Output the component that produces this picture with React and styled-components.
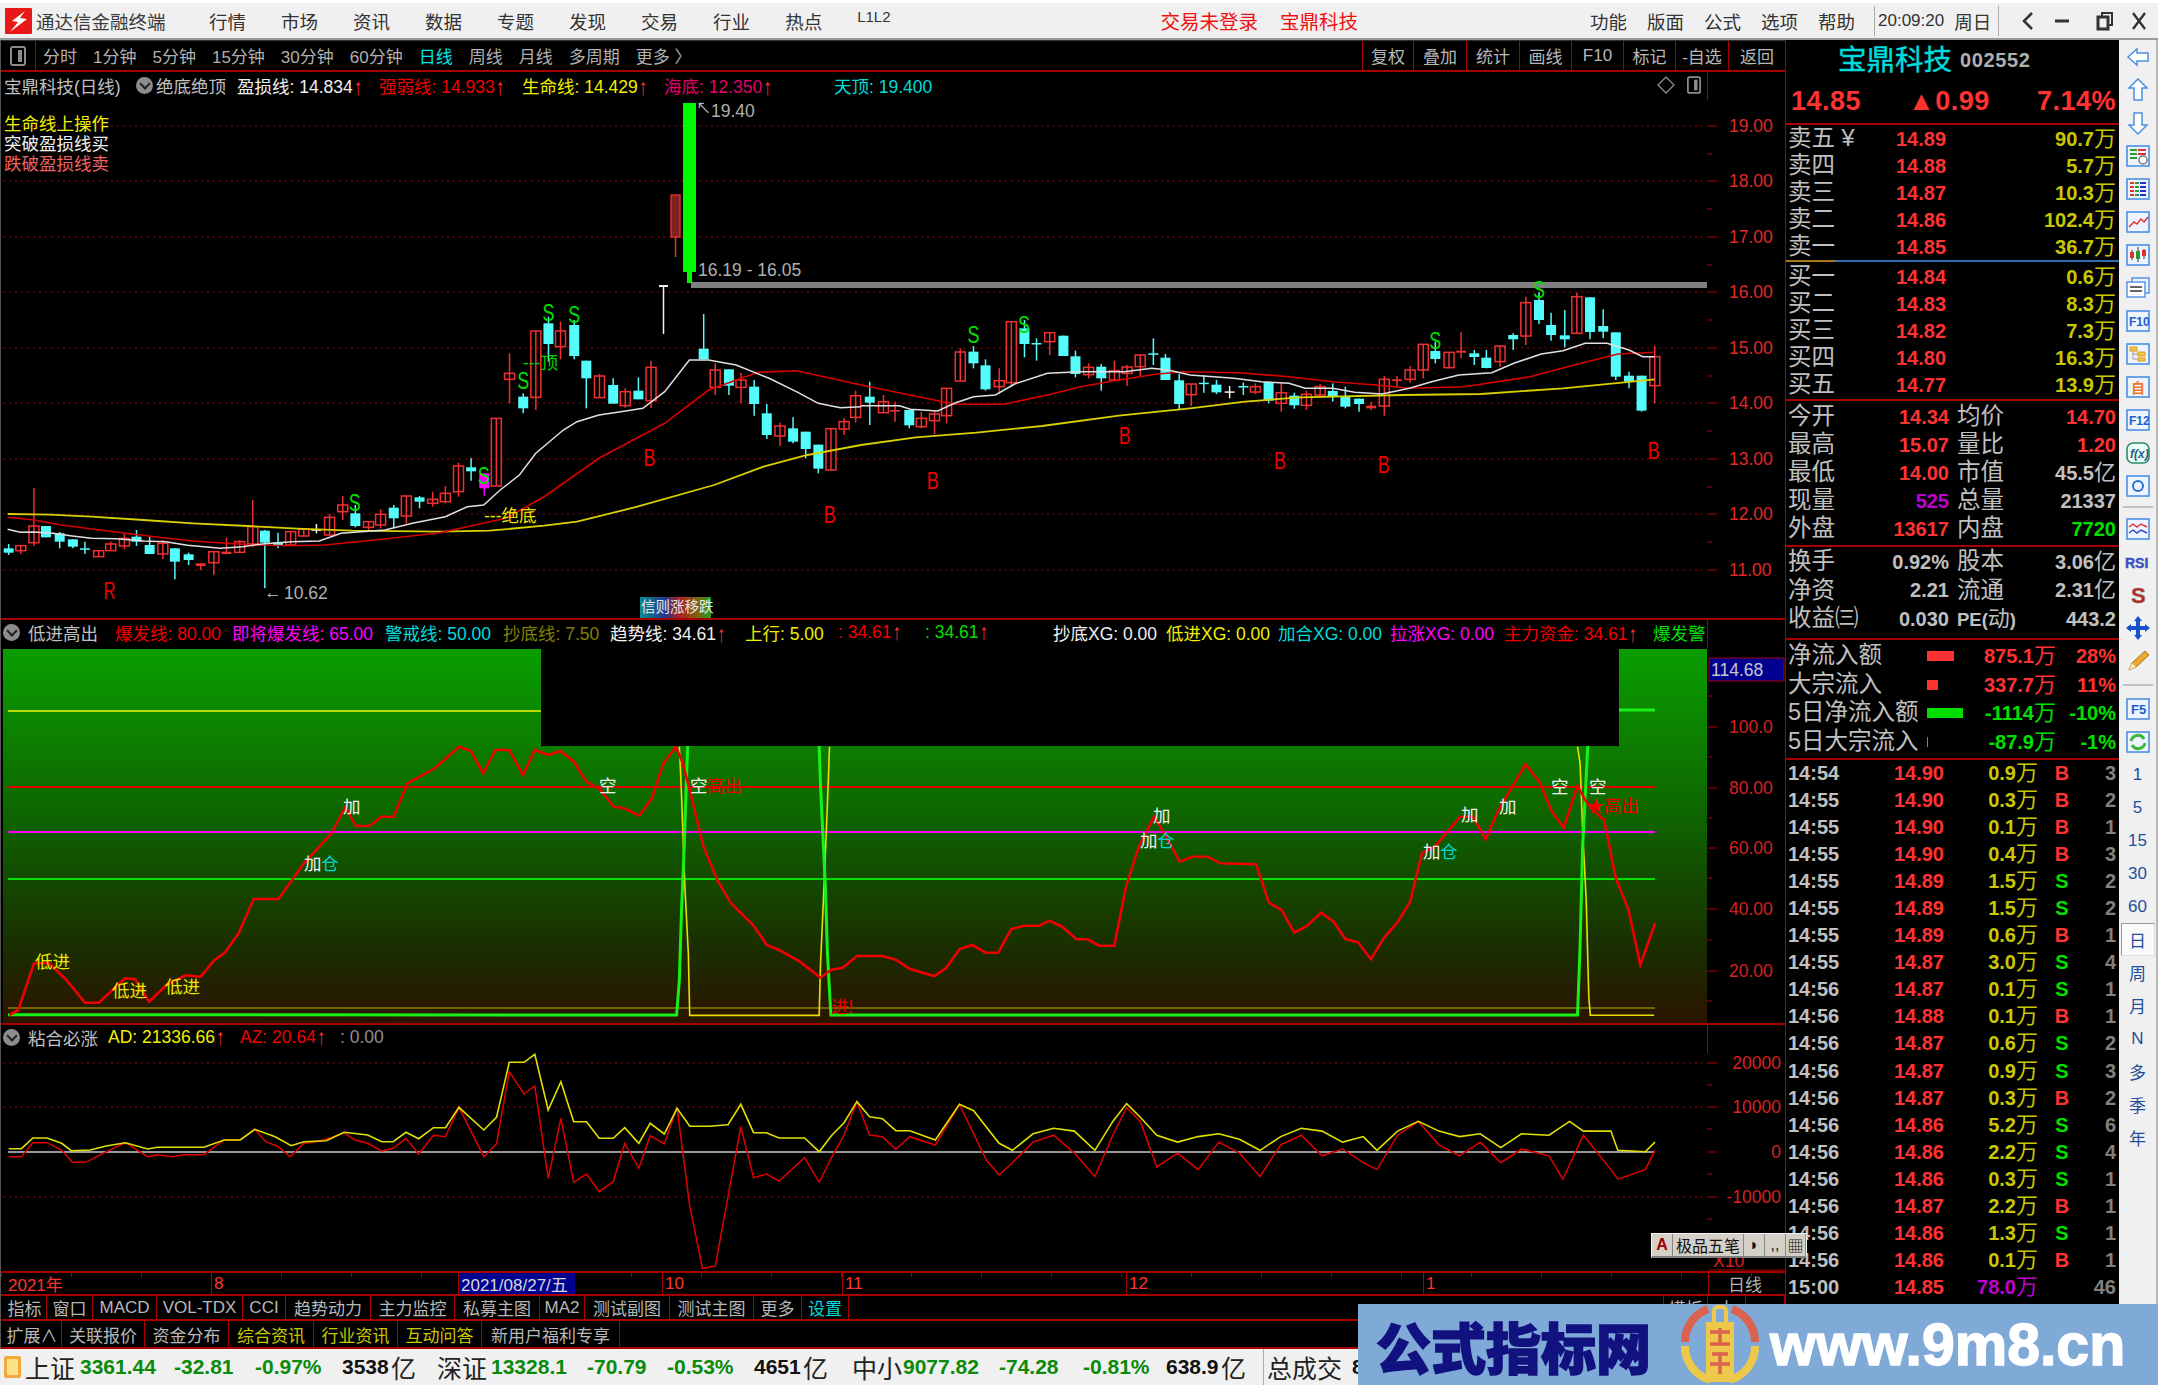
import React from "react";
import styled, { createGlobalStyle } from "styled-components";

const RED_LINE = "#a80000";
const GRAY = "#c0c0c0";
const RED = "#ff3232";
const OLIVE = "#c8c800";

const Global = createGlobalStyle`
  html, body { margin: 0; padding: 0; background: #000; }
  body { font-family: "Liberation Sans", "Noto Sans CJK SC", sans-serif; }
  * { box-sizing: border-box; }
`;

const Screen = styled.div`
  position: relative;
  width: 2158px;
  height: 1385px;
  overflow: hidden;
  display: flex;
  flex-direction: column;
  background: #000;
`;

/* ---------- title bar ---------- */
const TitleBar = styled.div`
  height: 40px;
  display: flex;
  align-items: center;
  background: #f0f0f0;
  border-top: 3px solid #fff;
  border-bottom: 2px solid #9a9a9a;
  color: #333;
  font-size: 18.5px;
`;
const AppName = styled.div`
  width: 173px;
  flex: none;
  color: #3a3a3a;
`;
const MenuGroup = styled.div`
  display: flex;
  gap: ${(p) => p.$gap}px;
  margin-left: ${(p) => p.$ml || 0};
  color: ${(p) => p.$c || "#333"};
  font-size: ${(p) => p.$s || 18.5}px;
`;
const SmallMenu = styled.span`
  font-size: 15px;
`;
const Clock = styled.div`
  height: 30px;
  margin-left: 19px;
  padding: 0 4px 0 3px;
  display: flex;
  gap: 10px;
  align-items: center;
  border-left: 1px solid #aaa;
  border-right: 1px solid #aaa;
  font-size: 17px;
  width: 125px;
  span:last-child { font-size: 18.5px; white-space: nowrap; }
`;
const WinButtons = styled.div`
  width: 159px;
  flex: none;
  display: flex;
  align-items: center;
`;
const WinGlyph = styled.svg`
  display: block;
  flex: none;
  margin-left: ${(p) => p.$ml}px;
`;

/* ---------- layout ---------- */
const Body = styled.div`
  flex: 1;
  display: flex;
  min-height: 0;
`;
const ChartColumn = styled.div`
  width: 1786px;
  flex: none;
  display: flex;
  flex-direction: column;
  border-left: 1px solid #555;
  border-right: 1px solid ${RED_LINE};
  color: ${GRAY};
  font-size: 17px;
`;
const PeriodBar = styled.div`
  height: 32px;
  flex: none;
  display: flex;
  align-items: center;
  border-top: 1px solid #333;
  border-bottom: 2px solid ${RED_LINE};
`;
const CornerButton = styled.div`
  width: 35px;
  height: 100%;
  flex: none;
  display: flex;
  align-items: center;
  justify-content: center;
  border-right: 1px solid ${RED_LINE};
`;
const Periods = styled.div`
  display: flex;
  gap: 16px;
  margin-left: 7px;
`;
const Period = styled.span`
  color: ${(p) => (p.$on ? "#00e8e8" : "#b0b0b0")};
  white-space: nowrap;
`;
const ToolCells = styled.div`
  margin-left: auto;
  display: flex;
  height: 100%;
`;
const ToolCell = styled.div`
  width: ${(p) => p.$w}px;
  border-left: 1px solid ${RED_LINE};
  display: flex;
  align-items: center;
  justify-content: center;
  color: #b8b8b8;
  white-space: nowrap;
`;

const PaneHead = styled.div`
  height: ${(p) => p.$h}px;
  flex: none;
  ${(p) => p.$line && `border-top: 2px solid ${RED_LINE};`}
`;
const PaneText = styled.div`
  width: 1707px;
  height: 100%;
  display: flex;
  align-items: center;
  overflow: hidden;
  white-space: nowrap;
  font-size: 17.5px;
  padding-bottom: ${(p) => p.$pb || 0}px;
  border-right: 1px solid ${RED_LINE};
`;
const Legend = styled.span`
  flex: none;
  width: ${(p) => (p.$w ? `${p.$w}px` : "auto")};
  padding-left: ${(p) => p.$pl || 0}px;
  color: ${(p) => p.$c || GRAY};
`;
const Arrow = styled.span`
  display: inline-block;
  color: ${RED};
  font-weight: 700;
  margin-left: 1px;
  transform: scale(1, 1.3);
`;
const Toggle = styled.span`
  flex: none;
  width: 17px;
  height: 17px;
  margin: ${(p) => p.$m};
  border-radius: 50%;
  background: #8c8c8c;
  position: relative;
  &::after {
    content: "";
    position: absolute;
    left: 4.5px;
    top: 3px;
    width: 6px;
    height: 6px;
    border-right: 2px solid #222;
    border-bottom: 2px solid #222;
    transform: rotate(45deg);
  }
`;
const HeadIcons = styled.div`
  margin-left: auto;
  display: flex;
  gap: 12px;
  align-items: center;
  padding-right: 6px;
`;
const Plot = styled.svg`
  display: block;
  flex: none;
  width: 1784px;
  height: ${(p) => p.$h}px;
`;
const ChartLabel = styled.text`
  font-size: ${(p) => p.$s || 17.5}px;
  fill: ${(p) => p.$c || RED};
  text-anchor: ${(p) => p.$a || "start"};
  dominant-baseline: middle;
  font-weight: ${(p) => p.$b || 400};
`;

const TimeAxis = styled.div`
  height: 25px;
  flex: none;
  display: flex;
  border-top: 2px solid ${RED_LINE};
  border-bottom: 2px solid ${RED_LINE};
  color: ${RED};
  background-image: repeating-linear-gradient(90deg, ${RED_LINE} 0 1px, transparent 1px 70px);
  background-size: 100% 4px;
  background-repeat: no-repeat;
`;
const TimeCell = styled.div`
  width: ${(p) => p.$w}px;
  flex: none;
  display: flex;
  align-items: center;
  padding-left: ${(p) => p.$pl || 2}px;
  background: ${(p) => (p.$flag ? "#000090" : "transparent")};
  color: ${(p) => p.$c || RED};
  border-left: ${(p) => (p.$plain ? 0 : `1px solid ${RED_LINE}`)};
  white-space: nowrap;
`;
const TabRow = styled.div`
  height: ${(p) => p.$h}px;
  flex: none;
  display: flex;
  border-bottom: 2px solid ${RED_LINE};
  padding-left: 2px;
`;
const Tab = styled.div`
  width: ${(p) => p.$w}px;
  flex: none;
  display: flex;
  align-items: center;
  justify-content: center;
  color: ${(p) => p.$c || "#b8b8b8"};
  border-right: 1px solid ${RED_LINE};
  white-space: nowrap;
  ${(p) => p.$push && `margin-left: auto; border-left: 1px solid ${RED_LINE};`}
`;

/* ---------- quote column ---------- */
const QuoteColumn = styled.div`
  width: 333px;
  flex: none;
  color: ${GRAY};
  font-size: 20px;
  line-height: 1;
`;
const StockTitle = styled.div`
  height: 40px;
  display: flex;
  align-items: center;
  padding-left: 52px;
  gap: 8px;
  b {
    font-weight: 400;
    font-size: 28.5px;
    color: #00dcdc;
    -webkit-text-stroke: 0.4px #00dcdc;
  }
  span { font-size: 20px; font-weight: 700; color: #b0b0b0; letter-spacing: 0.6px; }
`;
const PriceRow = styled.div`
  height: 45px;
  display: flex;
  align-items: center;
  justify-content: space-between;
  padding: 0 3px 0 5px;
  border-bottom: 2px solid ${RED_LINE};
  font-size: 27px;
  font-weight: 700;
  color: ${RED};
  letter-spacing: 0.5px;
`;
const OrderRow = styled.div`
  height: 27px;
  display: grid;
  grid-template-columns: 108px 60px 1fr;
  align-items: center;
  padding: 0 3px 0 2px;
`;
const Label = styled.span`
  font-size: 23.5px;
  font-weight: 400;
  white-space: nowrap;
  color: ${GRAY};
`;
const PeLabel = styled.span`
  font-size: 18.5px;
  font-weight: 700;
  color: ${GRAY};
  white-space: nowrap;
`;
const Num = styled.span`
  font-weight: 700;
  white-space: nowrap;
  color: ${(p) => p.$c || GRAY};
  text-align: ${(p) => p.$a || "left"};
`;
const Unit = styled.span`
  font-size: 22px;
  font-weight: 400;
`;
const MidDivider = styled.div`
  height: 2px;
  margin: 0 0 1.5px;
  background: linear-gradient(90deg, #a87820 0 50px, #2c6ea8 50px);
`;
const Group = styled.div`
  height: ${(p) => p.$h}px;
  padding-top: ${(p) => p.$pt || 0}px;
  border-top: 2px solid ${RED_LINE};
`;
const StatRow = styled.div`
  height: ${(p) => p.$h}px;
  display: grid;
  grid-template-columns: 80px 81px 8px 80px 1fr;
  align-items: center;
  padding: 0 3px 0 2px;
`;
const FlowRow = styled.div`
  height: 28.7px;
  display: grid;
  grid-template-columns: 139px 45px 84px 1fr;
  align-items: center;
  padding: 0 3px 0 2px;
`;
const FlowBar = styled.i`
  display: block;
  height: 10px;
  width: ${(p) => p.$w}px;
  background: ${(p) => p.$c};
`;
const TickRow = styled.div`
  height: 27.05px;
  display: grid;
  grid-template-columns: 54px 102px 94px 48px 1fr;
  align-items: center;
  padding: 0 3px 0 2px;
`;
const Side = styled.span`
  font-weight: 700;
  text-align: center;
  color: ${(p) => (p.$v === "B" ? RED : "#00e000")};
`;

/* ---------- right tool strip ---------- */
const ToolStrip = styled.div`
  flex: 1;
  background: #f0f0f0;
  border-right: 2px solid #b8b8b8;
  display: flex;
  flex-direction: column;
  align-items: center;
`;
const StripItem = styled.div`
  height: 33px;
  width: 34px;
  flex: none;
  display: flex;
  align-items: center;
  justify-content: center;
  color: #1f4f9a;
  font-size: 17px;
  ${(p) => p.$on && "background: #fafafa; border: 1px solid #ddd; border-left-color: #999; border-top-color: #999;"}
`;
const StripGap = styled.div`
  height: ${(p) => p.$h}px;
  width: 30px;
  flex: none;
  display: flex;
  align-items: center;
  &::after { content: ""; width: 100%; height: 2px; background: #c0c0c0; }
`;

/* ---------- status bar ---------- */
const StatusBar = styled.div`
  height: 36px;
  flex: none;
  display: flex;
  align-items: center;
  background: #f0f0f0;
  padding-left: 4px;
  white-space: nowrap;
`;
const StatusCell = styled.span`
  flex: none;
  width: ${(p) => p.$w}px;
  color: ${(p) => p.$c || "#0a8a0a"};
  font-size: ${(p) => (p.$cjk ? 25 : 21)}px;
  font-weight: ${(p) => (p.$cjk ? 400 : 700)};
  ${(p) => p.$sep && "border-left: 1px solid #aaa; padding-left: 3px;"}
`;
const StatusIcon = styled.span`
  flex: none;
  width: 17px;
  height: 22px;
  margin-right: 4px;
  border: 3px solid #f2a93b;
  background: #ffe08a;
  border-radius: 2px;
`;

/* ---------- overlays ---------- */
const ImeBar = styled.div`
  position: absolute;
  left: 1651px;
  top: 1233px;
  width: 156px;
  height: 25px;
  display: flex;
  background: #d4d0c8;
  border: 1px solid #f4f4f4;
  border-bottom: 2px solid #808080;
  color: #111;
  font-size: 16px;
`;
const ImeCell = styled.span`
  width: ${(p) => p.$w}px;
  display: flex;
  align-items: center;
  justify-content: center;
  border-right: 1px solid #888;
  white-space: nowrap;
  color: ${(p) => p.$c || "#111"};
`;
const Watermark = styled.div`
  position: absolute;
  left: 1358px;
  top: 1304px;
  width: 800px;
  height: 81px;
  display: flex;
  align-items: center;
  background: #7fa9d6;
`;
const Brand = styled.div`
  margin-left: 18px;
  width: 302px;
  flex: none;
  font-size: 55px;
  font-weight: 900;
  color: #11117f;
  -webkit-text-stroke: 1.5px #11117f;
  white-space: nowrap;
`;
const Site = styled.div`
  margin-left: 8px;
  font-size: 59px;
  font-weight: 700;
  color: #fff;
  -webkit-text-stroke: 1.5px #fff;
  white-space: nowrap;
`;
const BrandLogo = styled.svg`
  flex: none;
`;

/* ---------- data, read off the screen in crop coordinates ---------- */
const z7 = (x, y) => [x / 1.823, 240 + y / 3];
const z8 = (x, y) => [860 + x / 1.823, 240 + y / 3];
const z9 = (x, y) => [x / 1.452, 620 + y / 3];
const z10 = (x, y) => [1000 + x / 1.96, 620 + y / 3];
const z11 = (x, y) => [x / 1.568, 1020 + y / 3];
const full = (x, y) => [x * 1.376, y * 1.376];

const pts = (list, map) => list.map(([x, y]) => map(x, y).map((v) => v.toFixed(1)).join(",")).join(" ");

// x, body top, body bottom, wick top, wick bottom, kind
const candlesA = [
  [14, 925, 938, 912, 945, "c"], [36, 917, 932, 917, 942, "r"], [60, 858, 908, 745, 918, "r"], [82, 858, 892, 858, 892, "c"],
  [107, 880, 905, 876, 925, "c"], [131, 898, 920, 898, 925, "c"], [153, 925, 928, 905, 942, "c"], [178, 932, 950, 932, 950, "r"],
  [200, 912, 932, 905, 932, "r"], [225, 895, 918, 880, 928, "r"], [247, 890, 905, 870, 918, "c"], [271, 915, 942, 890, 942, "c"],
  [295, 910, 942, 900, 958, "r"], [317, 925, 965, 925, 1018, "c"], [342, 943, 960, 938, 975, "c"], [364, 970, 978, 970, 990, "f"],
  [388, 935, 968, 935, 1005, "r"], [411, 935, 942, 893, 942, "f"], [435, 905, 937, 900, 937, "r"], [459, 860, 912, 780, 922, "r"],
  [481, 872, 908, 870, 1045, "c"], [505, 908, 916, 878, 925, "c"], [528, 875, 915, 875, 915, "r"], [552, 868, 888, 868, 888, "r"],
  [575, 868, 872, 852, 880, "w"], [599, 832, 885, 822, 885, "r"], [623, 795, 815, 768, 840, "r"], [646, 820, 858, 795, 862, "c"],
  [670, 845, 862, 845, 870, "r"], [692, 823, 855, 808, 865, "r"], [716, 803, 835, 795, 865, "c"], [739, 768, 828, 768, 850, "r"],
  [763, 772, 785, 768, 805, "c"], [787, 778, 790, 755, 800, "r"], [810, 760, 785, 738, 790, "r"], [834, 678, 755, 668, 770, "r"],
  [857, 682, 694, 655, 722, "c"], [881, 700, 745, 700, 767, "m"], [903, 535, 738, 535, 738, "r"], [927, 400, 418, 340, 490, "r"],
  [952, 470, 505, 460, 520, "c"], [975, 273, 472, 273, 510, "r"], [998, 250, 312, 230, 365, "c"], [1020, 273, 320, 245, 358, "r"],
  [1045, 255, 348, 240, 358, "c"], [1067, 362, 415, 362, 505, "c"], [1091, 408, 473, 402, 473, "r"], [1116, 435, 491, 415, 491, "c"],
  [1138, 455, 497, 445, 503, "r"], [1162, 452, 478, 412, 478, "c"], [1185, 382, 482, 362, 505, "r"], [1281, 326, 358, 222, 358, "c"],
  [1302, 390, 442, 370, 465, "r"], [1327, 388, 437, 388, 465, "c"], [1349, 420, 442, 398, 490, "r"], [1373, 440, 492, 420, 527, "c"],
  [1396, 520, 585, 492, 597, "c"], [1420, 558, 588, 548, 618, "r"], [1444, 565, 605, 532, 610, "c"], [1467, 575, 627, 575, 655, "c"],
  [1490, 614, 686, 614, 700, "c"], [1513, 566, 690, 566, 690, "r"], [1537, 545, 567, 535, 585, "r"], [1558, 467, 532, 452, 548, "r"],
];
const candlesB = [
  [16, 470, 488, 425, 555, "c"], [41, 485, 518, 465, 520, "r"], [62, 510, 513, 485, 545, "f"], [88, 510, 556, 510, 565, "c"],
  [110, 535, 560, 515, 565, "r"], [134, 522, 542, 510, 582, "r"], [156, 445, 527, 445, 550, "r"], [181, 336, 423, 325, 423, "r"],
  [205, 335, 370, 318, 385, "c"], [227, 376, 448, 358, 452, "c"], [252, 422, 440, 385, 455, "r"], [274, 245, 428, 245, 440, "r"],
  [298, 265, 312, 240, 352, "c"], [320, 309, 312, 295, 362, "c"], [344, 278, 305, 278, 345, "r"], [369, 287, 348, 287, 348, "c"],
  [391, 349, 402, 332, 412, "c"], [415, 382, 404, 370, 415, "r"], [438, 380, 415, 372, 452, "c"], [462, 392, 420, 362, 420, "r"],
  [485, 381, 400, 375, 438, "r"], [509, 345, 380, 345, 408, "r"], [533, 340, 344, 295, 375, "c"], [555, 353, 420, 342, 420, "c"],
  [580, 421, 492, 402, 508, "c"], [602, 432, 464, 432, 498, "r"], [625, 428, 431, 405, 458, "c"], [648, 434, 457, 420, 462, "c"],
  [672, 454, 457, 438, 475, "w"], [697, 438, 441, 428, 465, "c"], [719, 440, 456, 430, 462, "r"], [743, 426, 482, 426, 490, "c"],
  [766, 458, 490, 430, 515, "r"], [790, 467, 496, 458, 506, "c"], [812, 463, 496, 452, 510, "r"], [837, 440, 465, 432, 470, "r"],
  [860, 453, 470, 430, 485, "c"], [883, 470, 500, 440, 505, "c"], [908, 476, 492, 476, 515, "c"], [930, 497, 505, 485, 510, "f"],
  [954, 418, 498, 408, 527, "r"], [977, 418, 423, 408, 440, "f"], [1001, 390, 418, 378, 428, "r"], [1025, 313, 390, 313, 415, "r"],
  [1047, 333, 357, 305, 370, "c"], [1072, 337, 383, 337, 383, "r"], [1094, 332, 338, 277, 355, "f"], [1118, 340, 351, 330, 375, "c"],
  [1140, 353, 384, 330, 385, "c"], [1165, 318, 365, 318, 380, "r"], [1189, 285, 298, 280, 330, "c"], [1212, 188, 288, 170, 315, "r"],
  [1236, 180, 240, 157, 252, "c"], [1258, 255, 285, 218, 302, "c"], [1283, 286, 298, 210, 322, "c"], [1305, 170, 280, 158, 280, "r"],
  [1329, 172, 276, 172, 298, "c"], [1353, 258, 275, 208, 295, "c"], [1376, 277, 410, 277, 420, "c"], [1400, 407, 425, 395, 445, "c"],
  [1423, 407, 512, 407, 515, "c"], [1447, 350, 437, 318, 490, "r"],
];
const CANDLE = { c: "#54fcfc", r: "#f03030", f: "#f03030", w: "#f0f0f0", m: "#ff00ff" };

const whiteA = [[12,868],[35,877],[60,876],[95,880],[130,888],[165,895],[210,896],[260,903],[300,905],[340,916],[400,925],[440,920],[480,911],[530,905],[580,903],[620,880],[700,870],[750,850],[810,830],[850,800],[880,795],[910,750],[945,705],[975,640],[1025,570],[1050,545],[1090,525],[1130,515],[1170,505],[1210,455],[1255,360],[1290,360],[1340,375],[1400,415],[1450,455],[1490,490],[1530,503],[1568,500]];
const whiteB = [[0,497],[70,497],[90,508],[140,513],[170,490],[205,470],[245,465],[280,432],[340,400],[400,395],[480,395],[530,385],[560,390],[600,405],[680,415],[730,425],[780,430],[810,445],[860,445],[900,457],[950,462],[1000,445],[1040,425],[1090,405],[1150,398],[1190,370],[1240,342],[1280,332],[1320,310],[1360,310],[1400,330],[1425,350],[1447,350]];
const redA = [[12,832],[60,840],[110,855],[180,870],[280,890],[350,903],[410,910],[460,914],[520,917],[590,915],[650,905],[720,893],[800,878],[850,860],[920,835],[990,770],[1090,655],[1210,550],[1290,450],[1380,397],[1450,392],[1568,435]];
const redB = [[0,435],[60,455],[140,482],[170,493],[260,493],[340,465],[400,440],[470,420],[540,402],[590,395],[690,398],[780,410],[860,425],[940,435],[1000,445],[1100,440],[1220,410],[1300,375],[1380,342],[1447,337]];
const yellowA = [[12,822],[90,824],[165,830],[260,840],[350,850],[450,858],[540,866],[640,872],[800,875],[890,872],[990,857],[1050,845],[1160,800],[1300,735],[1390,680],[1470,645],[1568,615]];
const yellowB = [[0,615],[100,592],[210,578],[330,558],[470,527],[600,505],[700,485],[800,472],[990,465],[1130,462],[1280,445],[1447,418]];

const sellMarks = [[z7,645,795],[z7,880,715],[z7,952,430],[z7,998,225],[z7,1045,232],[z8,205,290],[z8,297,262],[z8,1047,308],[z8,1236,155]];
const buyMarks = [[z7,1182,660,"B"],[z7,1511,830,"B"],[z7,198,1060,"R"],[z8,131,730,"B"],[z8,481,595,"B"],[z8,764,668,"B"],[z8,953,682,"B"],[z8,1445,640,"B"]];

const flowA = [[12,1185],[25,1170],[48,1030],[70,1030],[95,1080],[122,1148],[142,1148],[180,1075],[195,1078],[215,1145],[240,1095],[268,1066],[290,1070],[310,1020],[325,998],[345,940],[367,837],[403,837],[440,730],[480,640],[500,560],[515,618],[535,618],[552,590],[570,590],[590,490],[630,445],[665,380],[682,392],[700,460],[718,390],[738,390],[758,465],[775,390],[795,405],[812,393],[832,425],[850,485],[868,505],[890,560],[905,565],[927,587],[945,535],[962,430],[980,380],[990,430],[1000,510],[1020,680],[1040,780],[1060,850],[1092,915],[1112,975],[1130,990],[1160,1025],[1190,1073],[1205,1050],[1222,1043],[1243,1008],[1280,1008],[1300,1020],[1320,1047],[1355,1068],[1372,1045],[1392,987],[1410,975],[1430,998],[1448,998]];
const flowB = [[20,927],[45,917],[75,917],[95,902],[120,920],[148,958],[170,958],[192,977],[222,977],[245,800],[270,680],[300,590],[320,640],[350,725],[375,710],[405,710],[430,730],[500,733],[525,848],[550,870],[575,938],[600,918],[627,878],[652,905],[675,957],[700,967],[725,1018],[750,955],[778,905],[802,845],[825,700],[850,680],[900,590],[925,590],[950,658],[975,570],[1028,433],[1055,485],[1080,575],[1103,623],[1130,497],[1145,540],[1160,570],[1182,600],[1205,775],[1230,870],[1253,1035],[1282,910]];

const BASE_Y = 1014.7;
const pulseGreen = [
  [7, BASE_Y], ...[[981,1185],[985,1080],[988,880],[992,680],[997,380]].map(([x, y]) => z9(x, y)),
  [690, 710], [815, 710],
  ...[[1188,380],[1190,500],[1197,800],[1200,1000],[1205,1185]].map(([x, y]) => z9(x, y)),
  ...[[1130,1185],[1135,980],[1140,680],[1150,380]].map(([x, y]) => z10(x, y)),
  [1590, 710], [1654, 710],
];
const pulseYellow = [
  ...[[985,380],[988,520],[993,800],[998,1000],[1000,1186],[1188,1186],[1190,1030],[1195,800],[1200,550],[1203,380]].map(([x, y]) => z9(x, y)),
];
const pulseYellow2 = [[1130,380],[1135,430],[1140,630],[1147,840],[1152,1130],[1155,1186],[1280,1186]];

const adA = [[12,386],[32,386],[50,354],[72,354],[95,370],[110,392],[140,390],[165,378],[195,368],[230,387],[245,382],[318,382],[350,360],[375,360],[398,328],[430,350],[455,377],[475,365],[510,362],[538,337],[575,345],[597,365],[615,365],[635,337],[655,356],[678,323],[697,323],[718,262],[757,330],[777,292],[797,127],[820,127],[837,103],[858,270],[878,185],[898,305],[918,305],[938,355],[960,355],[978,323],[1000,370],[1018,310],[1040,342],[1060,265],[1080,319],[1110,319],[1140,314],[1160,253],[1180,338],[1200,338],[1220,354],[1260,354],[1283,395],[1303,345],[1322,308],[1342,245],[1362,290],[1382,296],[1403,332],[1425,332],[1465,360],[1503,253],[1525,272],[1565,370]];
const adB = [[735,836],[750,824],[765,820],[780,822],[795,836],[808,815],[818,802],[828,812],[840,825],[855,830],[870,826],[885,824],[900,828],[915,836],[930,826],[945,820],[960,822],[975,830],[990,826],[1000,836],[1015,822],[1030,815],[1045,822],[1060,826],[1075,824],[1090,834],[1105,824],[1125,825],[1140,815],[1150,822],[1170,822],[1175,836],[1195,837],[1202,830]];
const azA = [[12,410],[32,410],[50,368],[72,368],[95,390],[112,427],[133,427],[160,400],[195,368],[230,410],[245,404],[268,410],[285,404],[318,404],[350,360],[375,360],[398,328],[415,365],[435,380],[453,410],[475,370],[495,365],[520,352],[538,338],[555,360],[575,370],[597,393],[615,385],[635,355],[655,402],[678,346],[697,350],[718,262],[757,410],[777,372],[797,155],[820,222],[837,198],[858,475],[878,295],[898,487],[918,462],[938,515],[960,485],[978,370],[1000,445],[1018,347],[1040,372],[1060,262],[1080,560],[1100,745],[1120,738],[1140,530],[1160,320],[1180,473],[1200,462],[1220,483],[1260,413],[1283,487],[1303,410],[1322,345],[1342,245],[1362,345],[1382,350],[1403,388],[1425,350],[1465,375],[1503,253],[1545,420],[1565,465]];
const azB = [[735,845],[750,830],[765,825],[780,838],[795,855],[808,825],[818,805],[828,815],[840,848],[855,838],[870,850],[885,830],[900,838],[915,855],[930,832],[945,825],[960,840],[975,835],[990,845],[1000,850],[1015,825],[1030,815],[1045,832],[1060,840],[1075,830],[1090,845],[1105,835],[1125,840],[1135,857],[1150,825],[1170,850],[1175,857],[1195,850],[1202,836]];

const PRICE_AXIS = [[19, 126], [18, 181], [17, 237], [16, 292], [15, 348], [14, 403], [13, 459], [12, 514], [11, 570]];

const asks = [["卖五", "14.89", "90.7"], ["卖四", "14.88", "5.7"], ["卖三", "14.87", "10.3"], ["卖二", "14.86", "102.4"], ["卖一", "14.85", "36.7"]];
const bids = [["买一", "14.84", "0.6"], ["买二", "14.83", "8.3"], ["买三", "14.82", "7.3"], ["买四", "14.80", "16.3"], ["买五", "14.77", "13.9"]];
const ticks = [
  ["14:54","14.90","0.9","B",3],["14:55","14.90","0.3","B",2],["14:55","14.90","0.1","B",1],["14:55","14.90","0.4","B",3],
  ["14:55","14.89","1.5","S",2],["14:55","14.89","1.5","S",2],["14:55","14.89","0.6","B",1],["14:55","14.87","3.0","S",4],
  ["14:56","14.87","0.1","S",1],["14:56","14.88","0.1","B",1],["14:56","14.87","0.6","S",2],["14:56","14.87","0.9","S",3],
  ["14:56","14.87","0.3","B",2],["14:56","14.86","5.2","S",6],["14:56","14.86","2.2","S",4],["14:56","14.86","0.3","S",1],
  ["14:56","14.87","2.2","B",1],["14:56","14.86","1.3","S",1],["14:56","14.86","0.1","B",1],["15:00","14.85","78.0","",46],
];
const toolCells = [["复权", 51], ["叠加", 53], ["统计", 53], ["画线", 52], ["F10", 52], ["标记", 52], ["-自选", 53], ["返回", 57]];
const tabsMain = [["指标", 44], ["窗口", 46], ["MACD", 64], ["VOL-TDX", 86], ["CCI", 43], ["趋势动力", 85], ["主力监控", 84], ["私募主图", 85], ["MA2", 45], ["测试副图", 85], ["测试主图", 84], ["更多", 48]];

/* ---------- small drawings ---------- */
const Logo = () => (
  <svg width="27" height="26" viewBox="0 0 27 26" style={{ margin: "0 4px 0 5px", flex: "none" }}>
    <rect width="27" height="26" rx="1" fill="#e81818" />
    <path d="M20 3 L7 13 L13 14 L5 24 L22 11 L15 10 Z" fill="#fff" />
  </svg>
);

const Square = ({ size = 16 }) => (
  <svg width={size} height={size + 4} viewBox="0 0 16 20">
    <rect x="1" y="1" width="14" height="18" rx="2" fill="none" stroke="#8c8c8c" strokeWidth="2" />
    <rect x="8" y="4" width="4" height="12" fill="#8c8c8c" />
  </svg>
);

const Ico = ({ children }) => (
  <svg width="26" height="26" viewBox="0 0 26 26" fill="none">
    {children}
  </svg>
);
const Frame = ({ children }) => (
  <Ico>
    <rect x="2" y="3" width="22" height="20" fill="#eef4ff" stroke="#4a90e2" strokeWidth="1.6" />
    {children}
  </Ico>
);
const Bars = ({ rows }) =>
  rows.map(([x, y, w, c], i) => <rect key={i} x={x} y={y} width={w} height="2" fill={c} />);

const stripTop = [
  <Ico><path d="M3 13 L12 5 V9 H23 V17 H12 V21 Z" fill="#fff" stroke="#4a90e2" strokeWidth="1.5" /></Ico>,
  <Ico><path d="M13 2 L22 11 H17 V23 H9 V11 H4 Z" fill="#fff" stroke="#4a90e2" strokeWidth="1.5" /></Ico>,
  <Ico><path d="M13 24 L22 15 H17 V3 H9 V15 H4 Z" fill="#fff" stroke="#4a90e2" strokeWidth="1.5" /></Ico>,
  <Frame><Bars rows={[[5,6,7,"#2a9a2a"],[13,6,8,"#e03030"],[5,10,7,"#2a9a2a"],[13,10,8,"#e03030"],[5,14,7,"#2a9a2a"]]} /><circle cx="18" cy="17" r="4" fill="#fff" stroke="#777" strokeWidth="1.5" /></Frame>,
  <Frame><Bars rows={[[5,6,4,"#e03030"],[10,6,4,"#2a9a2a"],[15,6,6,"#2030d0"],[5,10,4,"#e03030"],[10,10,4,"#2a9a2a"],[15,10,6,"#2030d0"],[5,14,4,"#e03030"],[10,14,4,"#2a9a2a"],[15,14,6,"#2030d0"],[5,18,4,"#e03030"],[10,18,4,"#2a9a2a"],[15,18,6,"#2030d0"]]} /></Frame>,
  <Frame><path d="M4 18 L9 13 L12 15 L16 10 L19 13 L23 8" stroke="#e03030" strokeWidth="1.5" /></Frame>,
  <Frame><path d="M7 8 V18 M13 5 V20 M19 7 V17" stroke="#333" /><rect x="5" y="10" width="4" height="6" fill="#e03030" /><rect x="11" y="9" width="4" height="8" fill="#2a9a2a" /><rect x="17" y="8" width="4" height="6" fill="#e03030" /></Frame>,
  <Ico><rect x="7" y="3" width="17" height="15" fill="#eef4ff" stroke="#4a90e2" strokeWidth="1.4" /><rect x="2" y="7" width="18" height="15" fill="#fff" stroke="#4a90e2" strokeWidth="1.4" /><Bars rows={[[5,11,12,"#666"],[5,15,12,"#666"]]} /></Ico>,
  <Frame><text x="4" y="18" fontSize="12" fill="#2060c8" fontWeight="700">F10</text></Frame>,
  <Frame><rect x="5" y="6" width="7" height="4" fill="#f3c64a" stroke="#e0a020" /><rect x="13" y="11" width="7" height="4" fill="#f3c64a" stroke="#e0a020" /><rect x="13" y="17" width="7" height="3" fill="#f3c64a" stroke="#e0a020" /><path d="M8 10 V18 H13 M8 13 H13" stroke="#999" /></Frame>,
  <Frame><text x="6" y="19" fontSize="14" fill="#f07a28" fontWeight="700">自</text></Frame>,
  <Frame><text x="4" y="18" fontSize="12" fill="#2060c8" fontWeight="700">F12</text></Frame>,
  <Ico><rect x="2" y="3" width="22" height="20" rx="6" fill="#eafff4" stroke="#2a8a6a" strokeWidth="1.6" /><text x="5" y="18" fontSize="12" fill="#1f5f8a" fontStyle="italic" fontWeight="700">f(x)</text></Ico>,
  <Frame><circle cx="13" cy="13" r="5" stroke="#2a6fd0" strokeWidth="2" /></Frame>,
];
const stripMid = [
  <Frame><path d="M4 11 L8 8 L12 11 L16 8 L22 11" stroke="#e03030" strokeWidth="1.4" /><path d="M4 17 L8 14 L12 17 L16 14 L22 17" stroke="#3040d0" strokeWidth="1.4" /></Frame>,
  <Ico><text x="0" y="19" fontSize="14" fill="#3a50c0" fontWeight="700" stroke="#3a50c0" strokeWidth="0.4">RSI</text></Ico>,
  <Ico><text x="6" y="21" fontSize="22" fill="#c02020" fontWeight="700" stroke="#888" strokeWidth="0.6">S</text></Ico>,
  <Ico><path d="M13 1 L17 6 H15 V11 H20 V9 L25 13 L20 17 V15 H15 V20 H17 L13 25 L9 20 H11 V15 H6 V17 L1 13 L6 9 V11 H11 V6 H9 Z" fill="#1a50c8" /></Ico>,
  <Ico><path d="M4 22 L7 15 L20 3 L24 7 L11 19 Z" fill="#f0a830" stroke="#a87018" /><path d="M4 22 L7 15 L11 19 Z" fill="#ffe7b8" /></Ico>,
];
const stripLow = [
  <Frame><text x="6" y="18" fontSize="13" fill="#2060c8" fontWeight="700">F5</text></Frame>,
  <Frame><path d="M6 12 A7 7 0 0 1 19 10 M20 14 A7 7 0 0 1 7 16" stroke="#3cb83c" strokeWidth="3" /></Frame>,
];
const stripText = ["1", "5", "15", "30", "60", "日", "周", "月", "N", "多", "季", "年"];

const Candle = ({ c, map }) => {
  const [x, top, bot, hi, lo, kind] = c;
  const [px, y1] = map(x, top);
  const y2 = map(x, bot)[1];
  const color = CANDLE[kind];
  const solid = kind !== "r";
  return (
    <g>
      <line x1={px} x2={px} y1={map(x, hi)[1]} y2={map(x, lo)[1]} stroke={color} strokeWidth="1.5" />
      <rect
        x={px - 5}
        y={y1}
        width="10"
        height={Math.max(y2 - y1, 1.5)}
        fill={solid ? color : "none"}
        stroke={solid ? "none" : color}
        strokeWidth="1.5"
      />
    </g>
  );
};

const Grid = ({ ys, x2 = 1706 }) =>
  ys.map((y) => <line key={y} x1="2" x2={x2} y1={y} y2={y} stroke="#a00000" strokeDasharray="2 4" />);

const AxisTicks = ({ ys, minor = [] }) => (
  <>
    {ys.map((y) => <line key={y} x1="1706" x2="1716" y1={y} y2={y} stroke={RED_LINE} />)}
    {minor.map((y) => <line key={y} x1="1706" x2="1711" y1={y} y2={y} stroke={RED_LINE} />)}
  </>
);

const Mark = ({ at, t, c }) => {
  const [m, x, y] = at;
  const [px, py] = m(x, y);
  return (
    <ChartLabel x={px} y={py} $s={23} $c={c} $a="middle" textLength={12} lengthAdjust="spacingAndGlyphs">{t}</ChartLabel>
  );
};

const PriceChart = () => {
  const grid = PRICE_AXIS.map((p) => p[1]);
  const minor = grid.slice(0, -1).map((y) => y + 28);
  return (
    <Plot $h={518} viewBox="0 100 1784 518">
      <Grid ys={grid} />
      <AxisTicks ys={grid} minor={minor} />
      <rect x="690" y="282" width="1016" height="6" fill="#808080" />
      {candlesA.map((c) => <Candle key={c[0]} c={c} map={z7} />)}
      {candlesB.map((c) => <Candle key={c[0]} c={c} map={z8} />)}
      {/* long white spike with a cap, left of the limit-up bar */}
      <line x1="662.5" x2="662.5" y1="286" y2="334" stroke="#f0f0f0" strokeWidth="1.5" />
      <line x1="658" x2="667" y1="286" y2="286" stroke="#f0f0f0" strokeWidth="2" />
      <rect x="670" y="195" width="9" height="42" fill="#802020" stroke="#f03030" strokeWidth="1.3" />
      <line x1="674.5" x2="674.5" y1="237" y2="257" stroke="#f03030" strokeWidth="1.5" />
      <rect x="682" y="103" width="13" height="169" fill="#00f800" />
      <rect x="686" y="270" width="5" height="13" fill="#00f800" />

      <polyline points={pts(yellowA, z7)} fill="none" stroke="#d8d000" strokeWidth="1.8" />
      <polyline points={pts(yellowB, z8)} fill="none" stroke="#d8d000" strokeWidth="1.8" />
      <polyline points={pts(redA, z7)} fill="none" stroke="#d80000" strokeWidth="1.6" />
      <polyline points={pts(redB, z8)} fill="none" stroke="#d80000" strokeWidth="1.6" />
      <polyline points={pts(whiteA, z7)} fill="none" stroke="#e0e0e0" strokeWidth="1.5" />
      <polyline points={pts(whiteB, z8)} fill="none" stroke="#e0e0e0" strokeWidth="1.5" />

      <ChartLabel x="3" y="125" $c="#f0f000">生命线上操作</ChartLabel>
      <ChartLabel x="3" y="145" $c="#f0f0f0">突破盈损线买</ChartLabel>
      <ChartLabel x="3" y="165" $c="#f06060">跌破盈损线卖</ChartLabel>
      <ChartLabel x="695" y="109" $c="#c0c0c0" $s={15}>↖</ChartLabel>
      <ChartLabel x="710" y="112" $c="#b0b0b0">19.40</ChartLabel>
      <ChartLabel x="697" y="271" $c="#b0b0b0">16.19 - 16.05</ChartLabel>
      <ChartLabel x="263" y="593" $c="#c0c0c0">←</ChartLabel>
      <ChartLabel x="283" y="594" $c="#b0b0b0">10.62</ChartLabel>
      <ChartLabel x="483" y="517" $c="#e8e000">---绝底</ChartLabel>
      <ChartLabel x="522" y="364" $c="#00d000">---顶</ChartLabel>
      {sellMarks.map((m, i) => <Mark key={i} at={m} t="S" c="#00e000" />)}
      {buyMarks.map((m, i) => <Mark key={i} at={m} t={m[3]} c="#f00000" />)}

      <rect x="639" y="597" width="71" height="21" fill="url(#rank)" />
      <ChartLabel x="640" y="608" $s={14.5} $c="#e8e8e8">信则涨移跌</ChartLabel>
      <defs>
        <linearGradient id="rank" x1="0" x2="1">
          <stop offset="0" stopColor="#0a8a90" />
          <stop offset="0.35" stopColor="#203a90" />
          <stop offset="0.55" stopColor="#b02020" />
          <stop offset="0.8" stopColor="#806010" />
          <stop offset="1" stopColor="#20a020" />
        </linearGradient>
      </defs>

      {PRICE_AXIS.map(([v, y]) => (
        <ChartLabel key={v} x="1728" y={y + 1} $c="#e02828">{v}.00</ChartLabel>
      ))}
    </Plot>
  );
};

const INDICATOR_AXIS = [["100.0", 727], ["80.00", 788], ["60.00", 848], ["40.00", 909], ["20.00", 971]];

const IndicatorLabel = ({ x, y, a, b, ca = "#f0f0f0", cb = "#00d8d8" }) => (
  <>
    <ChartLabel x={x} y={y} $c={ca}>{a}</ChartLabel>
    {b && <ChartLabel x={x + 17} y={y} $c={cb}>{b}</ChartLabel>}
  </>
);

const IndicatorChart = () => (
  <Plot $h={375} viewBox="0 648 1784 375">
    <defs>
      <linearGradient id="swell" x1="0" y1="0" x2="0" y2="1">
        <stop offset="0" stopColor="#0a9e00" />
        <stop offset="0.45" stopColor="#0e6400" />
        <stop offset="0.8" stopColor="#1a2e00" />
        <stop offset="1" stopColor="#2c1400" />
      </linearGradient>
    </defs>
    <rect x="2" y="649" width="1704" height="374" fill="url(#swell)" />
    <line x1="7" x2="540" y1="711" y2="711" stroke="#b8d800" strokeWidth="2" />
    <line x1="7" x2="1654" y1="787" y2="787" stroke="#e00000" strokeWidth="2" />
    <line x1="7" x2="1654" y1="832" y2="832" stroke="#ff00ff" strokeWidth="2" />
    <line x1="7" x2="1654" y1="879" y2="879" stroke="#00e000" strokeWidth="2" />
    <line x1="7" x2="1654" y1="1008" y2="1008" stroke="#6e6400" strokeWidth="2" />
    <polyline points={pulseYellow.map((p) => p.join(",")).join(" ")} fill="none" stroke="#e8e000" strokeWidth="1.6" />
    <polyline points={pts(pulseYellow2, z10)} fill="none" stroke="#e8e000" strokeWidth="1.6" />
    <polyline points={pulseGreen.map((p) => p.join(",")).join(" ")} fill="none" stroke="#18f018" strokeWidth="3" />
    <polyline points={pts(flowA, z9) + " " + pts(flowB, z10)} fill="none" stroke="#f00000" strokeWidth="2.6" />

    {/* blacked out block in the source screenshot */}
    <rect x="540" y="649" width="1078" height="97" fill="#000" />

    <IndicatorLabel x={34} y={963} a="低进" ca="#f0e800" />
    <IndicatorLabel x={111} y={992} a="低进" ca="#f0e800" />
    <IndicatorLabel x={164} y={988} a="低进" ca="#f0e800" />
    <IndicatorLabel x={342} y={808} a="加" />
    <IndicatorLabel x={303} y={865} a="加" b="仓" />
    <IndicatorLabel x={598} y={787} a="空" />
    <IndicatorLabel x={689} y={787} a="空" b="高出" cb="#f00000" />
    <IndicatorLabel x={830} y={1008} a="进!" ca="#f00000" />
    <IndicatorLabel x={1152} y={817} a="加" />
    <IndicatorLabel x={1139} y={842} a="加" b="仓" />
    <IndicatorLabel x={1460} y={816} a="加" />
    <IndicatorLabel x={1498} y={808} a="加" />
    <IndicatorLabel x={1422} y={853} a="加" b="仓" />
    <IndicatorLabel x={1550} y={788} a="空" />
    <IndicatorLabel x={1588} y={788} a="空" />
    <ChartLabel x="1586" y="807" $c="#f00000">★</ChartLabel>
    <ChartLabel x="1603" y="807" $c="#f00000">高出</ChartLabel>

    <AxisTicks ys={INDICATOR_AXIS.map((a) => a[1])} minor={[696, 757, 818, 878, 940, 1001]} />
    {INDICATOR_AXIS.map(([t, y]) => <ChartLabel key={t} x="1728" y={y + 1} $c="#d82020">{t}</ChartLabel>)}
    <rect x="1708" y="658" width="75" height="23" fill="#000090" stroke={RED_LINE} />
    <ChartLabel x="1710" y="671" $c="#c8c8c8">114.68</ChartLabel>
  </Plot>
);

const VolumeChart = () => (
  <Plot $h={218} viewBox="0 1053 1784 218">
    <Grid ys={[1063, 1107, 1197]} />
    <line x1="7" x2="1654" y1="1152" y2="1152" stroke="#989898" strokeWidth="2" />
    <polyline points={pts(azA, z11) + " " + pts(azB, full)} fill="none" stroke="#e00000" strokeWidth="1.5" />
    <polyline points={pts(adA, z11) + " " + pts(adB, full)} fill="none" stroke="#e0e000" strokeWidth="1.6" />
    <AxisTicks ys={[1063, 1107, 1152, 1197]} minor={[1085, 1129, 1174, 1219, 1241]} />
    <ChartLabel x="1780" y="1064" $a="end" $c="#d82020">20000</ChartLabel>
    <ChartLabel x="1780" y="1108" $a="end" $c="#d82020">10000</ChartLabel>
    <ChartLabel x="1780" y="1153" $a="end" $c="#d82020">0</ChartLabel>
    <ChartLabel x="1780" y="1198" $a="end" $c="#d82020">-10000</ChartLabel>
    <line x1="1707" x2="1784" y1="1270" y2="1270" stroke={RED_LINE} />
    <ChartLabel x="1712" y="1262" $c="#d82020">X10</ChartLabel>
  </Plot>
);

const QuoteRows = ({ rows, mark }) =>
  rows.map(([l, p, v], i) => (
    <OrderRow key={l}>
      <Label>{l}{mark && i === 0 ? " ¥" : ""}</Label>
      <Num $c={RED}>{p}</Num>
      <Num $c={OLIVE} $a="right">{v}<Unit>万</Unit></Num>
    </OrderRow>
  ));

const Stat = ({ h, l1, v1, c1, l2, v2, c2 }) => (
  <StatRow $h={h}>
    <Label>{l1}</Label>
    <Num $c={c1} $a="right">{v1}</Num>
    <span />
    <Label>{l2}</Label>
    <Num $c={c2} $a="right">{v2}</Num>
  </StatRow>
);

export default function App() {
  return (
    <Screen>
      <Global />
      <TitleBar>
        <Logo />
        <AppName>通达信金融终端</AppName>
        <MenuGroup $gap={35}>
          {["行情", "市场", "资讯", "数据", "专题", "发现", "交易", "行业", "热点"].map((m) => <span key={m}>{m}</span>)}
          <SmallMenu>L1L2</SmallMenu>
        </MenuGroup>
        <MenuGroup $gap={22} $ml="270px" $c="#f01010" $s={19.5}>
          <span>交易未登录</span>
          <span>宝鼎科技</span>
        </MenuGroup>
        <MenuGroup $gap={20} $ml="auto">
          {["功能", "版面", "公式", "选项", "帮助"].map((m) => <span key={m}>{m}</span>)}
        </MenuGroup>
        <Clock><span>20:09:20</span><span>周日</span></Clock>
        <WinButtons>
          <WinGlyph $ml={22} width="14" height="20" viewBox="0 0 14 20"><path d="M11 2 L3 10 L11 18" fill="none" stroke="#333" strokeWidth="2.5" /></WinGlyph>
          <WinGlyph $ml={19} width="16" height="20" viewBox="0 0 16 20"><path d="M1 10 H15" stroke="#333" strokeWidth="3" /></WinGlyph>
          <WinGlyph $ml={26} width="18" height="20" viewBox="0 0 18 20"><rect x="6" y="2" width="10" height="12" fill="none" stroke="#333" strokeWidth="2" /><rect x="2" y="6" width="10" height="12" fill="#f0f0f0" stroke="#333" strokeWidth="3" /></WinGlyph>
          <WinGlyph $ml={17} width="16" height="20" viewBox="0 0 16 20"><path d="M2 2 L14 18 M14 2 L2 18" stroke="#333" strokeWidth="2.4" /></WinGlyph>
        </WinButtons>
      </TitleBar>

      <Body>
        <ChartColumn>
          <PeriodBar>
            <CornerButton><Square /></CornerButton>
            <Periods>
              {["分时", "1分钟", "5分钟", "15分钟", "30分钟", "60分钟"].map((p) => <Period key={p}>{p}</Period>)}
              <Period $on>日线</Period>
              {["周线", "月线", "多周期", "更多 〉"].map((p) => <Period key={p}>{p}</Period>)}
            </Periods>
            <ToolCells>
              {toolCells.map(([c, w]) => <ToolCell key={c} $w={w}>{c}</ToolCell>)}
            </ToolCells>
          </PeriodBar>

          <PaneHead $h={28}>
            <PaneText $pb={2}>
              <Legend $w={133} $pl={3}>宝鼎科技(日线)</Legend>
              <Toggle $m="0 3px 0 2px" />
              <Legend $w={81}>绝底绝顶</Legend>
              <Legend $w={142} $c="#f0f0f0">盈损线: 14.834<Arrow>↑</Arrow></Legend>
              <Legend $w={143} $c="#f00000">强弱线: 14.933<Arrow>↑</Arrow></Legend>
              <Legend $w={142} $c="#f0f000">生命线: 14.429<Arrow>↑</Arrow></Legend>
              <Legend $w={170} $c="#e0006a">海底: 12.350<Arrow>↑</Arrow></Legend>
              <Legend $c="#00dcdc">天顶: 19.400</Legend>
              <HeadIcons>
                <svg width="18" height="18" viewBox="0 0 18 18"><path d="M9 1 L17 9 L9 17 L1 9 Z" fill="none" stroke="#8c8c8c" strokeWidth="1.3" /></svg>
                <Square size={14} />
              </HeadIcons>
            </PaneText>
          </PaneHead>
          <PriceChart />

          <PaneHead $h={30} $line>
            <PaneText $pb={4}>
              <Toggle $m="0 8px 0 2px" />
              <Legend $w={87}>低进高出</Legend>
              <Legend $w={117} $c="#f00000">爆发线: 80.00</Legend>
              <Legend $w={153} $c="#ff00ff">即将爆发线: 65.00</Legend>
              <Legend $w={118} $c="#00dcdc">警戒线: 50.00</Legend>
              <Legend $w={107} $c="#808000">抄底线: 7.50</Legend>
              <Legend $w={135} $c="#f0f0f0">趋势线: 34.61<Arrow>↑</Arrow></Legend>
              <Legend $w={93} $c="#f0f000">上行: 5.00</Legend>
              <Legend $w={87} $c="#f00000"> : 34.61<Arrow>↑</Arrow></Legend>
              <Legend $w={128} $c="#00e000"> : 34.61<Arrow>↑</Arrow></Legend>
              <Legend $w={113} $c="#f0f0f0">抄底XG: 0.00</Legend>
              <Legend $w={112} $c="#f0f000">低进XG: 0.00</Legend>
              <Legend $w={112} $c="#00dcdc">加合XG: 0.00</Legend>
              <Legend $w={114} $c="#ff00ff">拉涨XG: 0.00</Legend>
              <Legend $w={149} $c="#f00000">主力资金: 34.61<Arrow>↑</Arrow></Legend>
              <Legend $c="#00e000">爆发警</Legend>
            </PaneText>
          </PaneHead>
          <IndicatorChart />

          <PaneHead $h={30} $line>
            <PaneText $pb={4}>
              <Toggle $m="0 8px 0 2px" />
              <Legend $w={80}>粘合必涨</Legend>
              <Legend $w={132} $c="#f0f000">AD: 21336.66<Arrow>↑</Arrow></Legend>
              <Legend $w={100} $c="#f00000">AZ: 20.64<Arrow>↑</Arrow></Legend>
              <Legend $c="#909090"> : 0.00</Legend>
            </PaneText>
          </PaneHead>
          <VolumeChart />

          <TimeAxis>
            <TimeCell $w={210} $plain $pl={7}>2021年</TimeCell>
            <TimeCell $w={247}>8</TimeCell>
            <TimeCell $w={117} $flag $c="#d8d8d8">2021/08/27/五</TimeCell>
            <TimeCell $w={87} $plain />
            <TimeCell $w={180}>10</TimeCell>
            <TimeCell $w={284}>11</TimeCell>
            <TimeCell $w={297}>12</TimeCell>
            <TimeCell $w={285}>1</TimeCell>
            <TimeCell $w={76} $c="#b0b0b0" $pl={19}>日线</TimeCell>
          </TimeAxis>
          <TabRow $h={25}>
            {tabsMain.map(([t, w]) => <Tab key={t} $w={w}>{t}</Tab>)}
            <Tab $w={47} $c="#00dcdc">设置</Tab>
            <Tab $push $w={45}>模板</Tab>
            <Tab $w={38}>大</Tab>
            <Tab $w={39} />
          </TabRow>
          <TabRow $h={28}>
            <Tab $w={59}>扩展∧</Tab>
            <Tab $w={83}>关联报价</Tab>
            <Tab $w={84}>资金分布</Tab>
            <Tab $w={85} $c={OLIVE}>综合资讯</Tab>
            <Tab $w={84} $c={OLIVE}>行业资讯</Tab>
            <Tab $w={84} $c={OLIVE}>互动问答</Tab>
            <Tab $w={138}>新用户福利专享</Tab>
          </TabRow>
        </ChartColumn>

        <QuoteColumn>
          <StockTitle><b>宝鼎科技</b><span>002552</span></StockTitle>
          <PriceRow><span>14.85</span><span>▲0.99</span><span>7.14%</span></PriceRow>
          <QuoteRows rows={asks} mark />
          <MidDivider />
          <QuoteRows rows={bids} />
          <Group $h={146} $pt={2}>
            <Stat h={28} l1="今开" v1="14.34" c1={RED} l2="均价" v2="14.70" c2={RED} />
            <Stat h={28} l1="最高" v1="15.07" c1={RED} l2="量比" v2="1.20" c2={RED} />
            <Stat h={28} l1="最低" v1="14.00" c1={RED} l2="市值" v2={<>45.5<Unit>亿</Unit></>} />
            <Stat h={28} l1="现量" v1="525" c1="#c000d0" l2="总量" v2="21337" />
            <Stat h={28} l1="外盘" v1="13617" c1={RED} l2="内盘" v2="7720" c2="#00e000" />
          </Group>
          <Group $h={93} $pt={1}>
            <Stat h={28.5} l1="换手" v1="0.92%" l2="股本" v2={<>3.06<Unit>亿</Unit></>} />
            <Stat h={28.5} l1="净资" v1="2.21" l2="流通" v2={<>2.31<Unit>亿</Unit></>} />
            <Stat h={28.5} l1="收益㈢" v1="0.030" l2={<PeLabel>PE(<Unit>动</Unit>)</PeLabel>} v2="443.2" />
          </Group>
          <Group $h={120} $pt={2}>
            <FlowRow><Label>净流入额</Label><FlowBar $w={27} $c={RED} /><Num $c={RED} $a="right">875.1<Unit>万</Unit></Num><Num $c={RED} $a="right">28%</Num></FlowRow>
            <FlowRow><Label>大宗流入</Label><FlowBar $w={11} $c={RED} /><Num $c={RED} $a="right">337.7<Unit>万</Unit></Num><Num $c={RED} $a="right">11%</Num></FlowRow>
            <FlowRow><Label>5日净流入额</Label><FlowBar $w={36} $c="#00e000" /><Num $c="#00e000" $a="right">-1114<Unit>万</Unit></Num><Num $c="#00e000" $a="right">-10%</Num></FlowRow>
            <FlowRow><Label>5日大宗流入</Label><FlowBar $w={1} $c="#00e000" /><Num $c="#00e000" $a="right">-87.9<Unit>万</Unit></Num><Num $c="#00e000" $a="right">-1%</Num></FlowRow>
          </Group>
          <Group $h={2} />
          {ticks.map(([t, p, v, s, n], i) => (
            <TickRow key={i}>
              <Num>{t}</Num>
              <Num $c={RED} $a="right">{p}</Num>
              <Num $c={s ? OLIVE : "#c000d0"} $a="right">{v}<Unit>万</Unit></Num>
              {s ? <Side $v={s}>{s}</Side> : <span />}
              <Num $c="#808080" $a="right">{n}</Num>
            </TickRow>
          ))}
        </QuoteColumn>

        <ToolStrip>
          {stripTop.map((icon, i) => <StripItem key={i}>{icon}</StripItem>)}
          <StripGap $h={10} />
          {stripMid.map((icon, i) => <StripItem key={i}>{icon}</StripItem>)}
          <StripGap $h={15} />
          {stripLow.map((icon, i) => <StripItem key={i}>{icon}</StripItem>)}
          {stripText.map((t) => <StripItem key={t} $on={t === "日"}>{t}</StripItem>)}
        </ToolStrip>
      </Body>

      <StatusBar>
        <StatusIcon />
        <StatusCell $w={55} $cjk $c="#222">上证</StatusCell>
        <StatusCell $w={94}>3361.44</StatusCell>
        <StatusCell $w={81}>-32.81</StatusCell>
        <StatusCell $w={87}>-0.97%</StatusCell>
        <StatusCell $w={49} $c="#111">3538</StatusCell>
        <StatusCell $w={46} $cjk $c="#222">亿</StatusCell>
        <StatusCell $w={54} $cjk $c="#222">深证</StatusCell>
        <StatusCell $w={96}>13328.1</StatusCell>
        <StatusCell $w={80}>-70.79</StatusCell>
        <StatusCell $w={87}>-0.53%</StatusCell>
        <StatusCell $w={49} $c="#111">4651</StatusCell>
        <StatusCell $w={49} $cjk $c="#222">亿</StatusCell>
        <StatusCell $w={51} $cjk $c="#222">中小</StatusCell>
        <StatusCell $w={96}>9077.82</StatusCell>
        <StatusCell $w={84}>-74.28</StatusCell>
        <StatusCell $w={83}>-0.81%</StatusCell>
        <StatusCell $w={55} $c="#111">638.9</StatusCell>
        <StatusCell $w={42} $cjk $c="#222">亿</StatusCell>
        <StatusCell $w={89} $cjk $c="#222" $sep>总成交</StatusCell>
        <StatusCell $w={60} $c="#111">8190</StatusCell>
      </StatusBar>

      <ImeBar>
        <ImeCell $w={21} $c="#a00000"><b>A</b></ImeCell>
        <ImeCell $w={71}>极品五笔</ImeCell>
        <ImeCell $w={21}>◗</ImeCell>
        <ImeCell $w={21}>,,</ImeCell>
        <ImeCell $w={20}>▦</ImeCell>
      </ImeBar>

      <Watermark>
        <Brand>公式指标网</Brand>
        <BrandLogo width="84" height="81" viewBox="0 0 84 81">
          <path d="M7 38 A35 35 0 0 1 30 5 M77 38 A35 35 0 0 0 54 5" fill="none" stroke="#d9634e" strokeWidth="8" />
          <path d="M7 42 A35 35 0 0 0 32 76 M77 42 A35 35 0 0 1 52 76" fill="none" stroke="#ecc94b" strokeWidth="8" />
          <rect x="28" y="18" width="28" height="60" fill="#ecc94b" />
          <rect x="36" y="3" width="12" height="18" rx="4" fill="none" stroke="#ecc94b" strokeWidth="4" />
          <path d="M32 28 H52 M42 24 V42 M32 40 H52 M34 50 H50 M42 50 V70 M32 60 H52" stroke="#d9634e" strokeWidth="3.5" />
        </BrandLogo>
        <Site>www.9m8.cn</Site>
      </Watermark>
    </Screen>
  );
}
